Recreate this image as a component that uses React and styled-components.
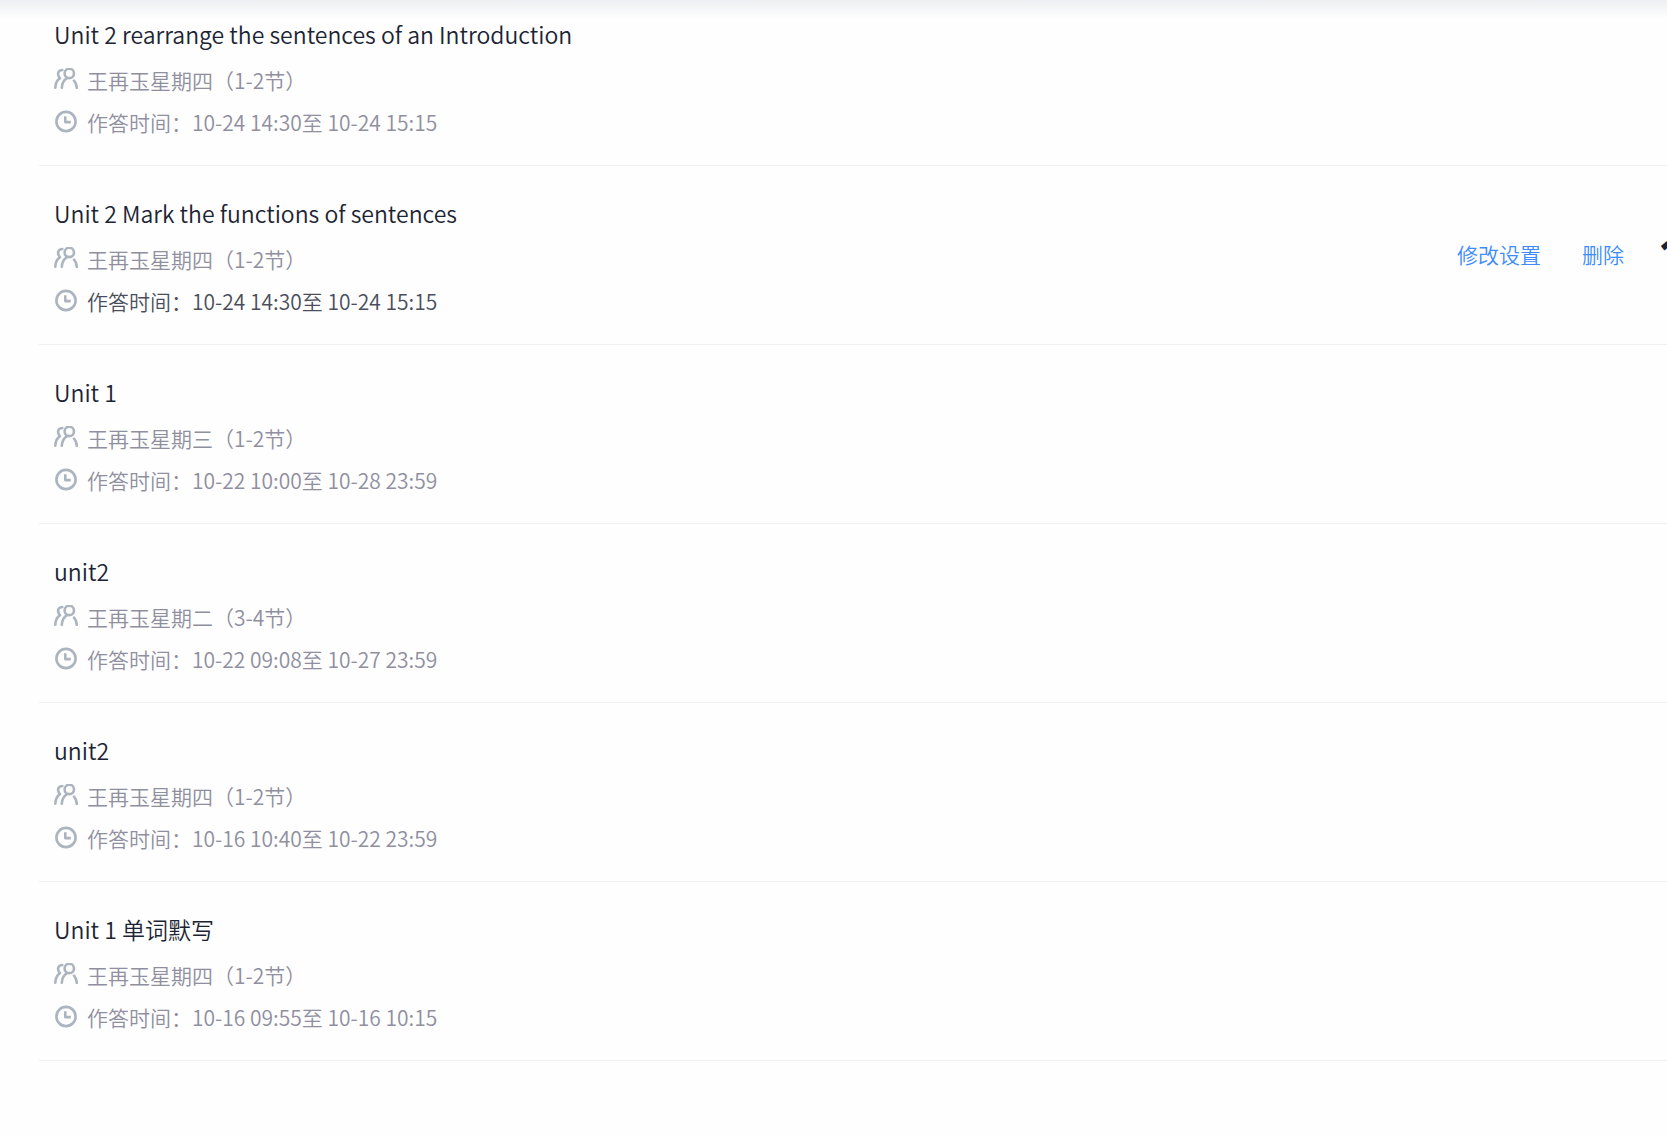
import React from 'react';
import styled, { createGlobalStyle } from 'styled-components';

const assignments = [
	{
		id: 1,
		title: 'Unit 2 rearrange the sentences of an Introduction',
		group: '王再玉星期四（1-2节）',
		time: '10-24 14:30至 10-24 15:15',
	},
	{
		id: 2,
		title: 'Unit 2 Mark the functions of sentences',
		group: '王再玉星期四（1-2节）',
		time: '10-24 14:30至 10-24 15:15',
		active: true,
		count: 1,
	},
	{
		id: 3,
		title: 'Unit 1',
		group: '王再玉星期三（1-2节）',
		time: '10-22 10:00至 10-28 23:59',
	},
	{
		id: 4,
		title: 'unit2',
		group: '王再玉星期二（3-4节）',
		time: '10-22 09:08至 10-27 23:59',
	},
	{
		id: 5,
		title: 'unit2',
		group: '王再玉星期四（1-2节）',
		time: '10-16 10:40至 10-22 23:59',
	},
	{
		id: 6,
		title: 'Unit 1 单词默写',
		group: '王再玉星期四（1-2节）',
		time: '10-16 09:55至 10-16 10:15',
	},
];

const GroupIcon = () => (
	<Icon viewBox="0 0 24 24" aria-hidden="true">
		<circle cx="15.3" cy="5.4" r="4.7" />
		<path d="M7.8 19.8C8 15.4 9.8 12 13 10.1" />
		<path d="M20 12.6C21.7 14.4 22.6 16.8 22.8 19.8" />
		<path d="M8.3 2C5.3 2.2 3.9 4.2 4.1 6.2C4.2 7.8 5 9.2 6 10.1C3 12 1.4 15.4 1.3 19.8" />
	</Icon>
);

const ClockIcon = () => (
	<Icon viewBox="0 0 24 24" aria-hidden="true">
		<circle cx="12" cy="11.5" r="9.6" />
		<path d="M11.3 6.3V12.1H16.8" strokeLinecap="butt" />
	</Icon>
);

const AssignmentItem = ({ title, group, time, active, count }) => {
	return (
		<Item>
			<Info>
				<Title>{title}</Title>
				<Meta>
					<GroupIcon />
					{group}
				</Meta>
				<Meta $dark={active}>
					<ClockIcon />
					作答时间：{time}
				</Meta>
			</Info>
			{active && (
				<Actions>
					<Action type="button">修改设置</Action>
					<Action type="button">删除</Action>
					<Count>{count}</Count>
				</Actions>
			)}
		</Item>
	);
};

const App = () => {
	return (
		<Page>
			<GlobalStyle />
			<TopShade />
			<List>
				{assignments.map(({ id, ...item }) => (
					<AssignmentItem key={id} {...item} />
				))}
			</List>
		</Page>
	);
};

export default App;

const GlobalStyle = createGlobalStyle`
	* {
		box-sizing: border-box;
	}

	body {
		margin: 0;
		background: #fefefe;
		font-family: 'Noto Sans CJK SC', 'Noto Sans', sans-serif;
		overflow-x: hidden;
	}
`;

const Page = styled.main`
	position: relative;
	overflow: hidden;
`;

const TopShade = styled.div`
	position: absolute;
	top: 0;
	left: 0;
	right: 0;
	height: 18px;
	background: linear-gradient(#eceef1, #fefefe);
`;

const List = styled.ul`
	position: relative;
	margin: 0 0 0 39px;
	padding: 0;
	list-style: none;
`;

const Item = styled.li`
	display: flex;
	justify-content: space-between;
	padding: 29px 0 22px 15px;
	border-bottom: 1px solid #eff0f2;

	&:first-child {
		padding-top: 16px;
	}
`;

const Info = styled.div`
	min-width: 0;
`;

const Title = styled.h2`
	margin: 0 0 7px;
	font-size: 23px;
	font-weight: 350;
	line-height: 36px;
	color: #1c2433;
`;

const Meta = styled.div`
	display: flex;
	align-items: center;
	gap: 9px;
	height: 42px;
	font-size: 21px;
	line-height: 42px;
	font-weight: 350;
	white-space: nowrap;
	color: ${({ $dark }) => ($dark ? '#4a4e5c' : '#8f8fa0')};
`;

const Icon = styled.svg`
	flex: none;
	width: 24px;
	height: 24px;
	fill: none;
	stroke: #acb4c0;
	stroke-width: 2.6;
	stroke-linecap: round;
	stroke-linejoin: round;
`;

const Actions = styled.div`
	display: flex;
	align-items: center;
	gap: 34px;
	height: 118px;
`;

const Action = styled.button`
	padding: 0;
	border: 0;
	background: none;
	font-family: inherit;
	font-size: 21px;
	font-weight: 350;
	line-height: 32px;
	white-space: nowrap;
	color: #3d8bff;
	cursor: pointer;

	& + & {
		margin-left: 7px;
	}
`;

const Count = styled.strong`
	width: 9px;
	font-family: 'Noto Sans', sans-serif;
	font-size: 48px;
	font-weight: 700;
	line-height: 48px;
	white-space: nowrap;
	color: #1c2433;
`;
